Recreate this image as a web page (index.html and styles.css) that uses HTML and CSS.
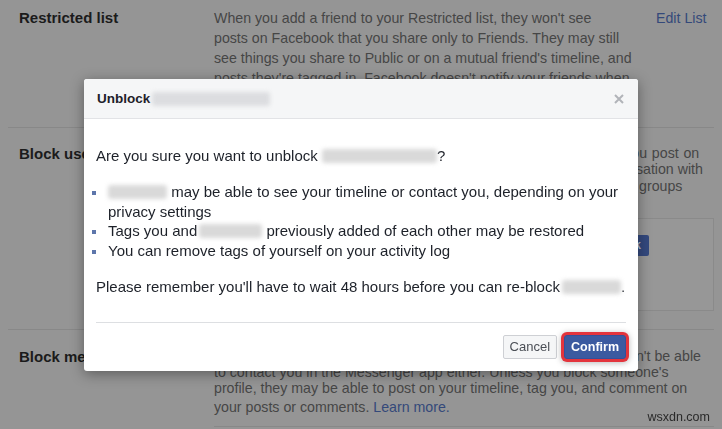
FILE: index.html
```html
<!DOCTYPE html>
<html>
<head>
<meta charset="utf-8">
<link rel="stylesheet" href="styles.css">
</head>
<body>
<div class="page">
  <section class="row row-restricted">
    <div class="label">Restricted list</div>
    <p class="desc"><span class="ln">When you add a friend to your Restricted list, they won't see</span><span class="ln">posts on Facebook that you share only to Friends. They may still</span><span class="ln">see things you share to Public or on a mutual friend's timeline, and</span><span class="ln">posts they're tagged in. Facebook doesn't notify your friends when</span><span class="ln">you add them to your Restricted list.</span></p>
    <a class="action">Edit List</a>
  </section>
  <section class="row row-block">
    <div class="label">Block users</div>
    <div class="content">
      <p class="desc tight"><span class="ln spread">Once you block someone, that person can no longer see things you post on</span><span class="ln">your timeline, tag you, invite you to events or groups, start a conversation with</span><span class="ln">you, or add you as a friend. Note: Does not include apps, games or groups</span></p>
      <div class="block-box">
        <div class="block-form">
          <span class="field">Block users</span>
          <span class="fb-btn">Block</span>
        </div>
      </div>
    </div>
  </section>
  <section class="row row-msg">
    <div class="label">Block messages</div>
    <div class="content">
      <p class="desc tight"><span class="ln">If you block messages and video calls from someone here, they won't be able</span><span class="ln">to contact you in the Messenger app either. Unless you block someone's</span><span class="ln">profile, they may be able to post on your timeline, tag you, and comment on</span><span class="ln">your posts or comments. <a class="link">Learn more.</a></span></p>
      <div class="end-line"></div>
    </div>
  </section>
</div>

<div class="overlay">
  <div class="dialog">
    <div class="dialog-header">
      <span class="title">Unblock</span><span class="blur blur-title"></span>
      <span class="close">
        <svg width="10" height="10" viewBox="0 0 10 10"><path d="M1 1L9 9M9 1L1 9" stroke="#b1b4b9" stroke-width="2" fill="none"/></svg>
      </span>
    </div>
    <div class="dialog-body">
      <p class="q">Are you sure you want to unblock <span class="blur blur-q"></span>?</p>
      <ul class="bullets">
        <li><span class="blur blur-b1"></span> may be able to see your timeline or contact you, depending on your privacy settings</li>
        <li>Tags you and<span class="blur blur-b2"></span> previously added of each other may be restored</li>
        <li>You can remove tags of yourself on your activity log</li>
      </ul>
      <p class="note">Please remember you'll have to wait 48 hours before you can re-block<span class="nowrap"><span class="blur blur-n"></span>.</span></p>
    </div>
    <div class="dialog-footer">
      <span class="btn btn-cancel">Cancel</span>
      <span class="btn btn-confirm">Confirm</span>
    </div>
  </div>
</div>

<div class="watermark">wsxdn.com</div>
</body>
</html>
```

FILE: styles.css
```css
* { box-sizing: border-box; }

html, body {
  margin: 0;
  height: 429px;
  overflow: hidden;
}

body {
  background: #959595;
  font-family: "Liberation Sans", Arial, sans-serif;
  color: #464646;
}

.page {
  padding-left: 8px;
  padding-right: 8px;
}

.row {
  display: grid;
  grid-template-columns: 195px 1fr;
  padding-left: 11px;
  border-top: 1px solid #888888;
}

.row-restricted {
  grid-template-columns: 195px 442px auto;
  border-top: none;
  padding-top: 8px;
  padding-bottom: 19px;
}

.label {
  font-weight: bold;
  font-size: 15px;
  line-height: 20px;
  color: #1b1b1b;
  white-space: nowrap;
}

.desc {
  margin: 0;
  font-size: 14.2px;
  line-height: 20px;
  color: #464646;
}

.desc.tight {
  line-height: 16.3px;
}

.ln {
  display: block;
  white-space: nowrap;
}

.ln.spread {
  word-spacing: 0.8px;
}

.action, .link {
  color: #34497a;
  font-size: 14.2px;
  line-height: 20px;
}

.row-block {
  padding-top: 17px;
  padding-bottom: 18px;
}

.row-block .label,
.row-msg .label {
  line-height: 18px;
}

.block-box {
  margin-top: 24px;
  height: 93px;
  border: 1px solid #8a8a8a;
  background: #979797;
  padding: 16px 64px 16px 16px;
}

.block-form {
  display: flex;
  align-items: center;
  justify-content: flex-end;
  gap: 8px;
}

.field {
  flex: 1;
  height: 21px;
  border: 1px solid #8a8a8a;
  color: #7a7a7a;
  font-size: 12px;
  line-height: 19px;
  padding-left: 6px;
}

.fb-btn {
  display: inline-block;
  height: 21px;
  padding: 0 8px;
  background: #34497e;
  border-radius: 2px;
  color: #b3b9c6;
  font-weight: bold;
  font-size: 12.5px;
  line-height: 21px;
}

.row-msg {
  padding-top: 18px;
}

.end-line {
  margin-top: 9px;
  border-top: 1px solid #888888;
}

/* dialog */
.overlay {
  position: fixed;
  inset: 0;
  display: flex;
  justify-content: center;
  align-items: flex-start;
  padding-top: 79px;
}

.dialog {
  width: 554px;
  background: #ffffff;
  border-radius: 3px;
  box-shadow: 0 3px 14px rgba(0, 0, 0, 0.38);
  color: #1d2129;
}

.dialog-header {
  display: flex;
  align-items: center;
  height: 40px;
  padding: 0 14px 0 13px;
  background: #f5f6f7;
  border-bottom: 1px solid #e2e3e6;
  border-radius: 3px 3px 0 0;
}

.title {
  font-weight: bold;
  font-size: 13.5px;
  color: #1d2129;
}

.close {
  margin-left: auto;
  display: flex;
  width: 10px;
  height: 10px;
}

.blur {
  display: inline-block;
  height: 14px;
  vertical-align: -2px;
  background: #d9d9d9;
  border-radius: 3px;
  filter: blur(2.2px);
}

.nowrap { white-space: nowrap; }

.blur-title { width: 118px; margin-left: 2px; background: #dcdde0; }
.blur-q { width: 115px; }
.blur-b1 { width: 59px; }
.blur-b2 { width: 63px; margin-left: 2px; }
.blur-n { width: 59px; margin-left: 2px; }

.dialog-body {
  padding: 27px 12px 0 12px;
  font-size: 15px;
  line-height: 19.4px;
}

.dialog-body p {
  margin: 0;
}

.q {
  margin-bottom: 17px !important;
}

.bullets {
  list-style: none;
  margin: 0 0 17px 0;
  padding: 0 0 0 12px;
}

.bullets li::before {
  content: "";
  display: inline-block;
  width: 4px;
  height: 4px;
  background: #5d76ab;
  margin-left: -16px;
  margin-right: 12px;
  vertical-align: 2px;
}

.dialog-footer {
  margin: 26px 12px 0 12px;
  border-top: 1px solid #dddfe2;
  padding: 12px 0 12px 0;
  display: flex;
  justify-content: flex-end;
  gap: 7px;
}

.btn {
  display: inline-block;
  height: 24px;
  border-radius: 2px;
  line-height: 22px;
  white-space: nowrap;
}

.btn-cancel {
  padding: 0 6px;
  font-size: 13px;
  background: #f5f6f7;
  border: 1px solid #ced0d4;
  color: #4b4f56;
}

.btn-confirm {
  padding: 0 6px;
  font-size: 12.5px;
  font-weight: bold;
  background: #3b5aa0;
  border: 1px solid #34509a;
  color: #ffffff;
  box-shadow: 0 0 0 3px #e3343c, 0 1px 6px 3px rgba(0, 0, 0, 0.28);
  border-radius: 3px;
}

.watermark {
  position: fixed;
  right: 12px;
  bottom: 5px;
  font-size: 12.5px;
  color: #2a2a2a;
}
```
